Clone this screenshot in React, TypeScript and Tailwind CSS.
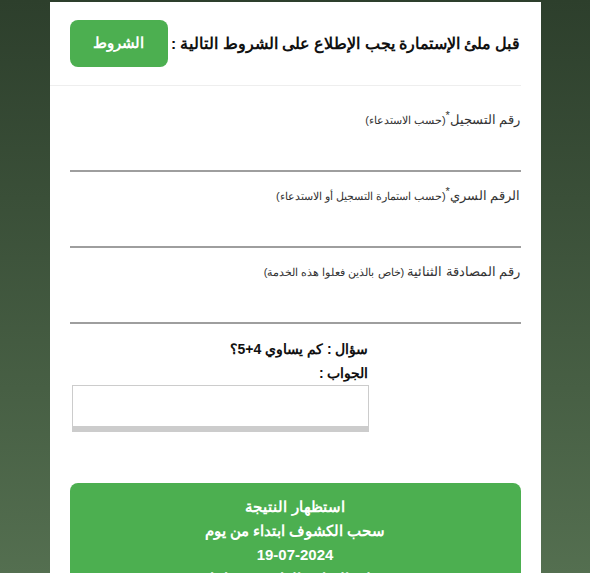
export default function App() {
  const fields = [
    { label: 'رقم التسجيل', star: true, hint: '(حسب الاستدعاء)' },
    { label: 'الرقم السري', star: true, hint: '(حسب استمارة التسجيل أو الاستدعاء)' },
    { label: 'رقم المصادقة الثنائية', star: false, hint: ' (خاص بالذين فعلوا هذه الخدمة)' },
  ]
  return (
    <div
      dir="rtl"
      className="h-[573px] overflow-hidden bg-gradient-to-b from-[#2d3f2c] to-[#546f50] pt-[2px] font-['Liberation_Sans',sans-serif]"
    >
      <div className="mx-auto w-[491px] bg-white pb-10">
        <div className="flex h-[83px] items-center justify-between px-5">
          <h2 className="text-[15.5px] font-bold whitespace-nowrap text-[#111]">
            قبل ملئ الإستمارة يجب الإطلاع على الشروط التالية :
          </h2>
          <button className="h-[47px] w-[98px] rounded-lg bg-[#4caf50] text-[15px] font-bold text-white">الشروط</button>
        </div>
        <div className="mr-5 border-t border-[#eee]" />
        <div className="flex flex-col gap-[14px] px-5 pt-6">
          {fields.map((f) => (
            <div key={f.label}>
              <label className="block h-5 text-[13px] leading-5 text-[#333]">
                {f.label}
                {f.star && <sup className="text-[11px]">*</sup>}
                <span className="text-[11px]">{f.hint}</span>
              </label>
              <input className="block h-[42px] w-full border-b-2 border-[#9e9e9e] outline-none" />
            </div>
          ))}
        </div>
        <div className="px-5 pt-[13px]">
          <div className="mr-auto ml-[2px] w-[297px]">
            <p className="text-[14px] font-bold leading-6 text-[#111]">سؤال : كم يساوي 4+5؟</p>
            <p className="text-[14px] font-bold leading-6 text-[#111]">الجواب :</p>
            <input className="block h-[47px] w-full border border-b-[6px] border-[#ccc] bg-white outline-none" />
          </div>
          <div className="mt-[51px] rounded-lg bg-[#4caf50] px-4 pt-[12px] pb-4 text-center text-[15px] font-bold leading-6 text-white">
            <p>استظهار النتيجة</p>
            <p>سحب الكشوف ابتداء من يوم</p>
            <p>19-07-2024</p>
            <p>على الساعة العاشرة صباحا</p>
          </div>
        </div>
      </div>
    </div>
  )
}
